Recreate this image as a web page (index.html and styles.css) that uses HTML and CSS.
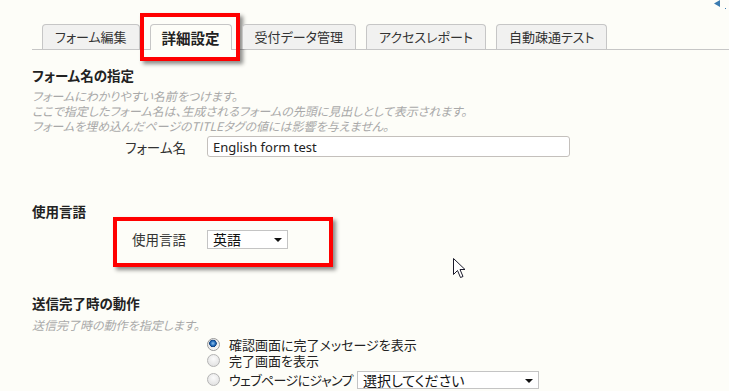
FILE: index.html
```html
<!DOCTYPE html>
<html lang="ja">
<head>
    <meta charset="UTF-8">
    <title>詳細設定</title>
    <link rel="stylesheet" href="styles.css">
</head>
<body>
    <div class="page">
        <svg class="corner" width="14" height="10" viewBox="0 0 14 10">
            <polygon points="7,0 7,7 1,3.5" fill="#3b7bb0"/>
            <rect x="12" y="8" width="1" height="1" fill="#3b7bb0"/>
        </svg>

        <ul class="tabs">
            <li class="tab">フォーム編集</li>
            <li class="tab active">詳細設定<span class="mark mark-tab"></span></li>
            <li class="tab">受付データ管理</li>
            <li class="tab">アクセスレポート</li>
            <li class="tab">自動疎通テスト</li>
        </ul>

        <div class="content">
            <section class="sec">
                <h2>フォーム名の指定</h2>
                <p class="desc">フォームにわかりやすい名前をつけます。<br>ここで指定したフォーム名は、生成されるフォームの先頭に見出しとして表示されます。<br>フォームを埋め込んだページのTITLEタグの値には影響を与えません。</p>
                <div class="row">
                    <label for="formName">フォーム名</label>
                    <input class="text-input" type="text" id="formName" value="English form test">
                </div>
            </section>

            <section class="sec sec-lang">
                <h2>使用言語</h2>
                <div class="row">
                    <label>使用言語</label>
                    <div class="select select-lang">英語</div>
                    <span class="mark mark-lang"></span>
                </div>
            </section>

            <section class="sec sec-done">
                <h2>送信完了時の動作</h2>
                <p class="desc">送信完了時の動作を指定します。</p>
                <ul class="choices">
                    <li class="choice"><span class="radio checked"></span>確認画面に完了メッセージを表示</li>
                    <li class="choice"><span class="radio"></span>完了画面を表示</li>
                    <li class="choice jump"><span class="radio"></span><span class="jump-label">ウェブページにジャンプ</span><div class="select select-page">選択してください</div></li>
                </ul>
            </section>
        </div>

        <svg class="cursor" width="14" height="21" viewBox="0 0 14 21">
            <path d="M0.5 0.5 L0.5 16.5 L4.5 12.5 L7.5 19.5 L10 18.5 L7 11.5 L12 11.5 Z" fill="#fff" stroke="#1a1a2a" stroke-width="1"/>
        </svg>
    </div>
</body>
</html>
```

FILE: styles.css
```css
* {
    box-sizing: border-box;
}

body {
    margin: 0;
    background: #fdfdf8;
    color: #333;
    font-family: "Noto Sans CJK JP", "Noto Sans", sans-serif;
    font-size: 13px;
    font-feature-settings: "palt";
}

.page {
    position: relative;
    width: 729px;
    height: 391px;
    overflow: hidden;
}

.corner {
    position: absolute;
    top: 0;
    right: 2px;
}

/* tabs */
.tabs {
    list-style: none;
    margin: 24px 0 0 32px;
    padding: 0 0 0 10px;
    display: flex;
    align-items: flex-start;
    gap: 10px;
    border-bottom: 1px solid #c6c6c6;
}

.tab {
    position: relative;
    height: 25px;
    line-height: 24px;
    padding: 0 12px;
    background: #f1f1f0;
    border: 1px solid #c6c6c6;
    border-bottom: none;
    border-radius: 4px 4px 0 0;
    color: #333;
    font-size: 13px;
}

.tab.active {
    height: 26px;
    margin-bottom: -1px;
    padding: 1px 11px 0;
    background: #fdfdf8;
    font-weight: bold;
    font-size: 14.5px;
    color: #222;
}

.mark {
    position: absolute;
    border: 4px solid #f00;
    box-shadow: 3px 3px 4px rgba(0, 0, 0, 0.45);
}

.mark-tab {
    left: -11px;
    top: -12px;
    width: 100px;
    height: 48px;
}

/* sections */
.content {
    padding-left: 32px;
}

.sec h2 {
    margin: 16px 0 0;
    font-size: 13.5px;
    font-weight: bold;
    line-height: 18px;
    color: #222;
}

.sec-lang h2,
.sec-done h2 {
    margin-top: 45px;
}

.desc {
    margin: 4px 0 0;
    font-size: 12px;
    font-style: italic;
    line-height: 15px;
    color: #a9a9a9;
}

.sec-done .desc {
    margin-top: 5px;
}

.row {
    position: relative;
    display: flex;
    align-items: center;
    margin-top: 3px;
}

.sec-lang .row {
    margin-top: 9px;
}

.row label {
    width: 154px;
    margin-right: 21px;
    text-align: right;
    font-size: 13.5px;
}

.text-input {
    width: 363px;
    height: 21px;
    padding: 0 5px;
    border: 1px solid #c4c0bc;
    border-radius: 3px;
    background: #fff;
    color: #222;
    font-family: "Noto Sans", sans-serif;
    font-size: 13px;
}

.select {
    position: relative;
    height: 19px;
    padding: 0 20px 0 5px;
    border: 1px solid #c4c4c4;
    background: #fff;
    color: #111;
    font-size: 14px;
    line-height: 17px;
}

.select::after {
    content: "";
    position: absolute;
    right: 5px;
    top: 7px;
    border-left: 4px solid transparent;
    border-right: 4px solid transparent;
    border-top: 4px solid #111;
}

.select-lang {
    width: 81px;
}

.mark-lang {
    left: 81px;
    top: -12px;
    width: 220px;
    height: 50px;
}

/* radio choices */
.choices {
    list-style: none;
    margin: 4px 0 0;
    padding: 0 0 0 175px;
}

.choice {
    display: flex;
    align-items: center;
    gap: 9px;
    height: 16px;
    font-size: 13px;
    color: #222;
}

.choice.jump {
    height: 19px;
    margin-top: 2px;
}

.jump-label {
    letter-spacing: -0.6px;
}

.radio {
    width: 13px;
    height: 13px;
    border-radius: 50%;
    border: 1px solid #b4b4b4;
    background: radial-gradient(circle at 50% 35%, #fbfbfb, #dcdcdc);
}

.radio.checked {
    border-color: #9a9a9a;
    background: radial-gradient(circle at 45% 40%, #8ec2ee 0, #1c64b4 2.5px, #0d3e7c 3.5px, #e8e8e8 4px, #f6f6f6 6px);
}

.select-page {
    width: 182px;
    height: 18px;
    margin-left: -5px;
    line-height: 16px;
}

.cursor {
    position: absolute;
    left: 453px;
    top: 258px;
}
```
